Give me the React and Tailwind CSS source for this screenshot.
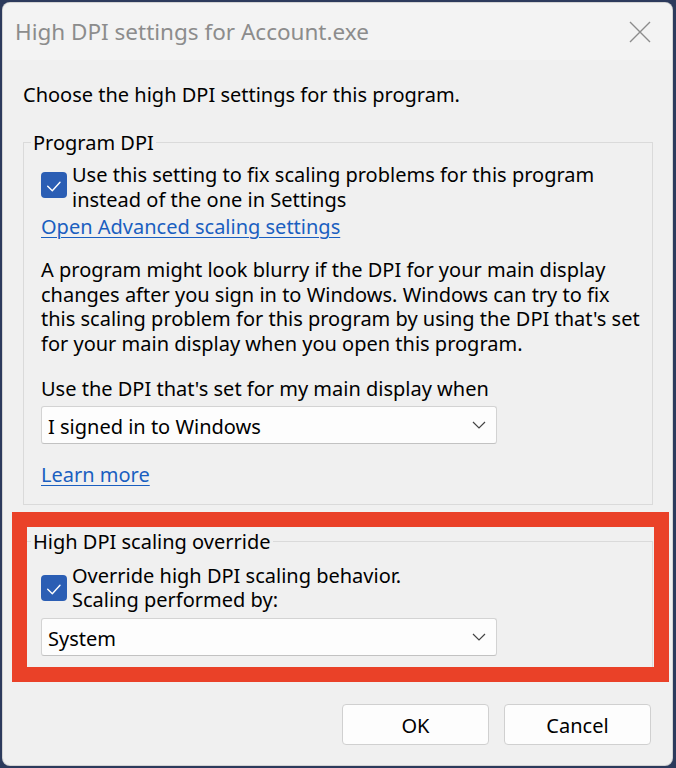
import React from 'react';

const font = { fontFamily: '"Noto Sans", "Open Sans", sans-serif' };

const CheckBox = () => (
    <span className="flex-shrink-0 w-[26px] h-[26px] rounded-[4px] bg-[#2b5eb4] flex items-center justify-center">
        <svg width="26" height="26" viewBox="0 0 26 26" fill="none">
            <polyline points="6.7,14.3 11.3,18.7 19,10.3" stroke="#ffffff" strokeWidth="1.4" strokeLinecap="round" strokeLinejoin="round" />
        </svg>
    </span>
);

const Select = ({ value }) => (
    <div className="w-[456px] h-[38px] flex items-center justify-between pl-[6px] pr-[10px] pt-[3px] bg-[#fdfdfd] border border-[#d3d3d3] border-b-[#c2c2c2] rounded-[3px]">
        <span>{value}</span>
        <svg width="14" height="8" viewBox="0 0 14 8" fill="none" className="-mt-[3px]">
            <polyline points="1,1 7,7 13,1" stroke="#444444" strokeWidth="1.2" />
        </svg>
    </div>
);

const Button = ({ children }) => (
    <button className="w-[147px] h-[41px] bg-[#fdfdfd] border border-[#d0d0d0] rounded-[4px] text-black pt-[2px]">
        {children}
    </button>
);

export default function App() {
    return (
        <div className="w-[676px] h-[768px] bg-[#2c3a5c] pt-[2px] pl-[2px] pr-[3px] pb-[2px]" style={font}>
            <div className="h-full flex flex-col bg-[#f0f0f0] rounded-[8px] overflow-hidden border border-[#a8a8a8]/40">
                {/* title bar */}
                <div className="h-[57px] flex-shrink-0 flex items-center justify-between bg-[#f3f3f3] pl-[12px] pr-[21px]">
                    <span className="text-[22.5px] text-[#8c8c8c]">High DPI settings for Account.exe</span>
                    <svg width="22" height="22" viewBox="0 0 22 22" fill="none">
                        <path d="M1 1 L21 21 M21 1 L1 21" stroke="#8c8c8c" strokeWidth="1.4" />
                    </svg>
                </div>

                {/* body */}
                <div className="flex flex-col pl-[20px] pr-[19px] text-[20px] leading-[25px] text-black">
                    <p className="mt-[22px]">Choose the high DPI settings for this program.</p>

                    <fieldset className="mt-[23px] border border-[#dadada] pl-[17px] pb-[17px]">
                        <legend className="-ml-[10px] px-[2px]">Program DPI</legend>
                        <div className="flex items-start gap-[5px] pt-[8px]">
                            <span className="mt-[9px]"><CheckBox /></span>
                            <span className="leading-[24.5px]">
                                Use this setting to fix scaling problems for this program<br />
                                instead of the one in Settings
                            </span>
                        </div>
                        <div className="mt-[2px]">
                            <a className="text-[#1a5fc0] underline underline-offset-[3px] decoration-[1px]">Open Advanced scaling settings</a>
                        </div>
                        <p className="mt-[19px] leading-[24.7px]">
                            A program might look blurry if the DPI for your main display<br />
                            changes after you sign in to Windows. Windows can try to fix<br />
                            this scaling problem for this program by using the DPI that's set<br />
                            for your main display when you open this program.
                        </p>
                        <p className="mt-[19px]">Use the DPI that's set for my main display when</p>
                        <div className="mt-[5px]">
                            <Select value="I signed in to Windows" />
                        </div>
                        <div className="mt-[18px]">
                            <a className="text-[#1a5fc0] underline underline-offset-[3px] decoration-[1px]">Learn more</a>
                        </div>
                    </fieldset>

                    <div className="relative mt-[24px]">
                        <fieldset className="border border-[#dadada] pl-[17px] pb-[13px]">
                            <legend className="-ml-[10px] px-[2px]">High DPI scaling override</legend>
                            <div className="flex items-center gap-[5px] pt-[10px]">
                                <CheckBox />
                                <span className="leading-[24.5px]">
                                    Override high DPI scaling behavior.<br />
                                    Scaling performed by:
                                </span>
                            </div>
                            <div className="mt-[5px]">
                                <Select value="System" />
                            </div>
                        </fieldset>
                        {/* red annotation frame */}
                        <div className="absolute -top-[17px] -left-[11px] -right-[16px] -bottom-[12px] border-[15px] border-[#ea4128] pointer-events-none" />
                    </div>

                    <div className="mt-[34px] flex justify-end gap-[15px] pr-[2px]">
                        <Button>OK</Button>
                        <Button>Cancel</Button>
                    </div>
                </div>
            </div>
        </div>
    );
}
